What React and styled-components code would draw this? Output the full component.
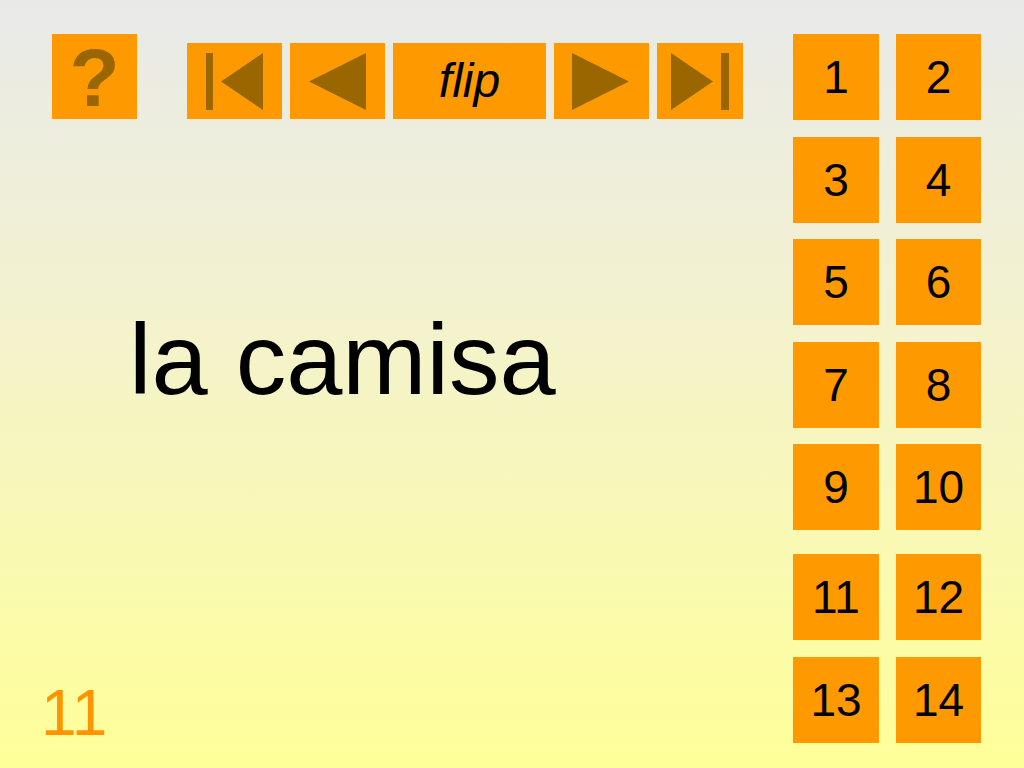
import React from 'react'
import styled, { createGlobalStyle } from 'styled-components'

const GlobalStyle = createGlobalStyle`
  html, body {
    margin: 0;
    padding: 0;
  }
  body {
    font-family: "Liberation Sans", Arial, Helvetica, sans-serif;
  }
`

const Page = styled.div`
  width: 1024px;
  height: 768px;
  box-sizing: border-box;
  display: flex;
  padding: 34px 43px 0 41px;
  background: linear-gradient(to bottom, #e9e9e9 0%, #f3f2cf 40%, #ffff99 100%);
  overflow: hidden;
`

const Main = styled.div`
  flex: 1;
  display: flex;
  flex-direction: column;
`

const Toolbar = styled.div`
  display: flex;
  align-items: flex-end;
  margin-left: 11px;
`

const HelpButton = styled.div`
  width: 85px;
  height: 85px;
  background: #ff9900;
  color: #996600;
  font-weight: bold;
  font-size: 82px;
  line-height: 88px;
  text-align: center;
  margin-right: 50px;
`

const NavGroup = styled.div`
  display: flex;
  gap: 8px;
`

const NavButton = styled.div`
  width: ${({ $w }) => $w}px;
  height: 76px;
  background: #ff9900;
  display: flex;
  align-items: center;
  justify-content: center;
  color: #000;
  font-style: italic;
  font-size: 48px;
  line-height: 1;
  svg {
    display: block;
  }
`

const Word = styled.div`
  margin: 190px 0 0 88px;
  font-size: 101px;
  line-height: 1;
  color: #000;
`

const PageNumber = styled.div`
  margin-top: auto;
  margin-bottom: 23px;
  font-size: 64px;
  line-height: 1;
  color: #ff9400;
`

const Side = styled.div`
  display: flex;
  flex-direction: column;
  gap: 24px;
`

const TileGrid = styled.div`
  display: grid;
  grid-template-columns: 86px 85px;
  grid-auto-rows: 86px;
  column-gap: 17px;
  row-gap: 16.5px;
`

const Tile = styled.div`
  background: #ff9900;
  display: flex;
  align-items: center;
  justify-content: center;
  font-size: 46px;
  color: #000;
`

const ICON = '#996600'

const FirstIcon = () => (
  <svg width="95" height="76" viewBox="0 0 95 76">
    <rect x="19" y="10" width="7" height="57" fill={ICON} />
    <polygon points="34,38.5 76,10 76,67" fill={ICON} />
  </svg>
)

const PrevIcon = () => (
  <svg width="95" height="76" viewBox="0 0 95 76">
    <polygon points="19,38.5 76,10 76,67" fill={ICON} />
  </svg>
)

const NextIcon = () => (
  <svg width="95" height="76" viewBox="0 0 95 76">
    <polygon points="18,10 75,38.5 18,67" fill={ICON} />
  </svg>
)

const LastIcon = () => (
  <svg width="86" height="76" viewBox="0 0 86 76">
    <polygon points="14,10 56,38.5 14,67" fill={ICON} />
    <rect x="64" y="10" width="8" height="57" fill={ICON} />
  </svg>
)

const topTiles = [1, 2, 3, 4, 5, 6, 7, 8, 9, 10]
const bottomTiles = [11, 12, 13, 14]

export default function App() {
  return (
    <>
      <GlobalStyle />
      <Page>
        <Main>
          <Toolbar>
            <HelpButton>?</HelpButton>
            <NavGroup>
              <NavButton $w={95}><FirstIcon /></NavButton>
              <NavButton $w={95}><PrevIcon /></NavButton>
              <NavButton $w={153}>flip</NavButton>
              <NavButton $w={95}><NextIcon /></NavButton>
              <NavButton $w={86}><LastIcon /></NavButton>
            </NavGroup>
          </Toolbar>
          <Word>la camisa</Word>
          <PageNumber>11</PageNumber>
        </Main>
        <Side>
          <TileGrid>
            {topTiles.map((n) => <Tile key={n}>{n}</Tile>)}
          </TileGrid>
          <TileGrid>
            {bottomTiles.map((n) => <Tile key={n}>{n}</Tile>)}
          </TileGrid>
        </Side>
      </Page>
    </>
  )
}
